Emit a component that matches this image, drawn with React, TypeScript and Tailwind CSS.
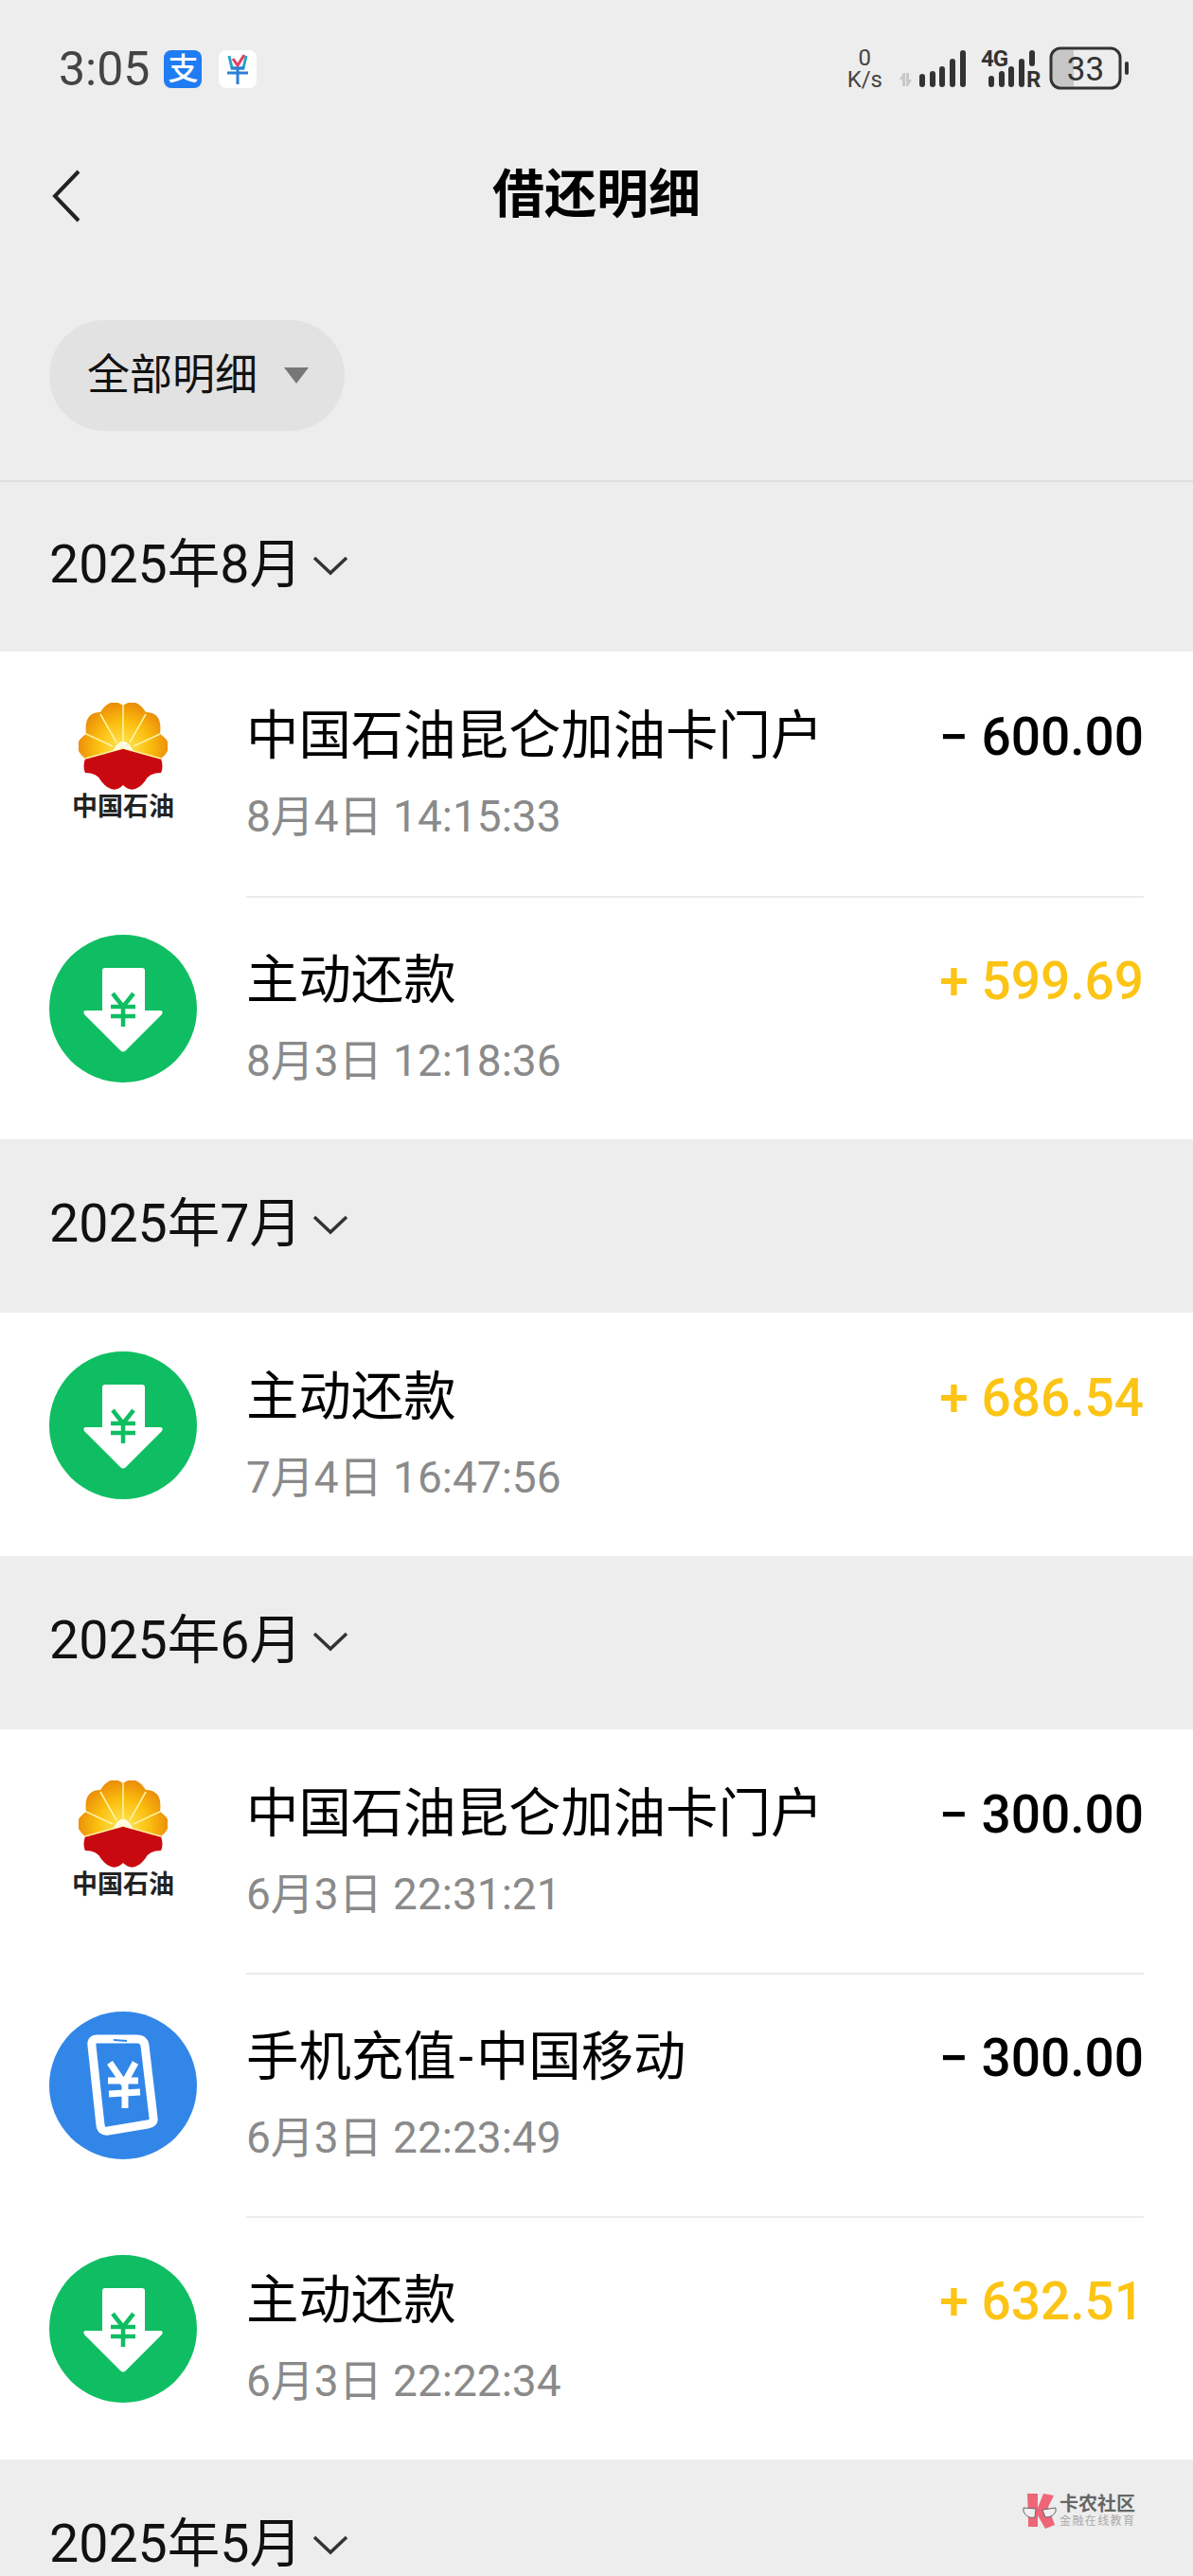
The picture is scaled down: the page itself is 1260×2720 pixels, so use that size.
import React from "react";

type Kind = "oil" | "repay" | "phone";

const sections: {
  month: string;
  first?: boolean;
  rows: { kind: Kind; title: string; date: string; amount: string }[];
}[] = [
  {
    month: "2025年8月",
    first: true,
    rows: [
      { kind: "oil", title: "中国石油昆仑加油卡门户", date: "8月4日 14:15:33", amount: "− 600.00" },
      { kind: "repay", title: "主动还款", date: "8月3日 12:18:36", amount: "+ 599.69" },
    ],
  },
  {
    month: "2025年7月",
    rows: [{ kind: "repay", title: "主动还款", date: "7月4日 16:47:56", amount: "+ 686.54" }],
  },
  {
    month: "2025年6月",
    rows: [
      { kind: "oil", title: "中国石油昆仑加油卡门户", date: "6月3日 22:31:21", amount: "− 300.00" },
      { kind: "phone", title: "手机充值-中国移动", date: "6月3日 22:23:49", amount: "− 300.00" },
      { kind: "repay", title: "主动还款", date: "6月3日 22:22:34", amount: "+ 632.51" },
    ],
  },
  { month: "2025年5月", rows: [] },
];

function OilLogo() {
  return (
    <div className="flex flex-col items-center w-[156px]">
      <svg width="94" height="92" viewBox="0 0 94 92">
        <defs>
          <radialGradient id="sun" cx="47" cy="48" r="50" gradientUnits="userSpaceOnUse">
            <stop offset="0" stopColor="#ffe95a" />
            <stop offset="0.55" stopColor="#fbbf10" />
            <stop offset="1" stopColor="#ea8a08" />
          </radialGradient>
        </defs>
        <path
          d="M47 3 Q34 -7 23 10 Q5 10 8 33 Q-10 45 7 59 L47 48 L87 59 Q104 45 86 33 Q89 10 71 10 Q60 -7 47 3 Z"
          fill="url(#sun)"
        />
        <path
          d="M7 59 L47 48 L87 59 Q90 68 87 74 Q74 74 70 83 Q58 98 47 87 Q36 98 24 83 Q20 74 7 74 Q4 68 7 59 Z"
          fill="#c80a10"
        />
        <g stroke="#fff2a0" strokeWidth="1.6">
          <line x1="47" y1="40" x2="47" y2="3" />
          <line x1="40" y1="42" x2="23" y2="12" />
          <line x1="54" y1="42" x2="71" y2="12" />
          <line x1="36" y1="46" x2="8" y2="33" />
          <line x1="58" y1="46" x2="86" y2="33" />
          <line x1="7" y1="59" x2="47" y2="48" />
          <line x1="87" y1="59" x2="47" y2="48" />
        </g>
        <path d="M36 51 Q47 30 58 51 L47 48 Z" fill="#fffbe0" />
      </svg>
      <span className="mt-[3px] text-[27px] leading-[30px] font-bold text-[#222]">中国石油</span>
    </div>
  );
}

function RepayIcon() {
  return (
    <svg width="156" height="156" viewBox="0 0 156 156">
      <circle cx="78" cy="78" r="78" fill="#0fbe62" />
      <path
        d="M59 35 H98 Q101 35 101 38 V80 H117 Q121 80 119 84 L81 122 Q78 125 75 122 L37 84 Q35 80 39 80 H56 V38 Q56 35 59 35 Z"
        fill="#fff"
      />
      <g stroke="#0fbe62" strokeWidth="4.5" fill="none">
        <path d="M67 62 L78 76 L89 62" />
        <path d="M65 76 H91 M65 86 H91 M78 76 V97" />
      </g>
    </svg>
  );
}

function PhoneIcon() {
  return (
    <svg width="156" height="156" viewBox="0 0 156 156">
      <circle cx="78" cy="78" r="78" fill="#3286e8" />
      <path
        d="M51 29 L93 29 Q100 29 101 36 L110 112 Q111 118 104 119 L62 126 Q55 127 54 120 L45 36 Q44 29 51 29 Z"
        fill="#3286e8"
        stroke="#fff"
        strokeWidth="9"
        strokeLinejoin="round"
      />
      <path d="M68 30 L82 31" stroke="#3286e8" strokeWidth="2" />
      <g stroke="#fff" strokeWidth="7" fill="none">
        <path d="M64 54 L79 76 L91 54" />
        <path d="M62 73 H94 M63 87 L96 85 M80 76 V102" />
      </g>
    </svg>
  );
}

function StatusIcons() {
  return (
    <svg width="250" height="60" viewBox="-20 0 250 60">
      <g fill="#333">
        {[
          [5, 35],
          [16, 32],
          [26, 27],
          [37, 19],
          [48, 10],
          [78, 37],
          [89, 32],
          [99, 27],
          [110, 19],
        ].map(([x, y]) => (
          <rect key={`${x}`} x={x} y={y} width="6" height={49 - y} rx="3" />
        ))}
        <rect x="121" y="10" width="6" height="17" rx="3" />
      </g>
      <path d="M-12 34 L-16 41 H-13 V48 H-10 V34 Z M-7 48 L-3 41 H-6 V34 H-9 V48 Z" fill="#c8c8c8" />
      <text x="70" y="27" fontSize="24" fontWeight="700" fill="#333" textLength="29">
        4G
      </text>
      <text x="118" y="49" fontSize="24" fontWeight="700" fill="#333">
        R
      </text>
      <path d="M144 14 Q146 10 152 10 H168 V48 H152 Q146 48 144 44 Z" fill="#c6c6c6" />
      <rect x="144" y="8" width="73" height="42" rx="10" fill="none" stroke="#333" strokeWidth="3" />
      <text x="180.5" y="42" fontSize="35" textAnchor="middle" fill="#333">
        33
      </text>
      <rect x="222" y="22" width="4" height="14" rx="2" fill="#333" />
    </svg>
  );
}

function Row({
  row,
  index,
  tall,
}: {
  row: (typeof sections)[0]["rows"][0];
  index: number;
  tall: boolean;
}) {
  const [head, tail] = row.title.split("-");
  return (
    <div className={`flex bg-white ${tall ? "h-[258px]" : "h-[257px]"}`}>
      <div className={`w-[260px] shrink-0 pl-[52px] ${row.kind === "oil" ? "pt-[54px]" : "pt-[41px]"}`}>
        {row.kind === "oil" && <OilLogo />}
        {row.kind === "repay" && <RepayIcon />}
        {row.kind === "phone" && <PhoneIcon />}
      </div>
      <div
        className={`flex flex-1 justify-between mr-[52px] pt-[57px] ${
          index > 0 ? "border-t-2 border-[#ebebeb]" : "border-t-2 border-white"
        }`}
      >
        <div>
          <div className="text-[55.4px] leading-[62px] text-black whitespace-nowrap">
            {head}
            {tail && <span className="mx-[3px]">-</span>}
            {tail}
          </div>
          <div className="mt-[28px] text-[46px] leading-[50px] text-[#8a8a8a] whitespace-nowrap">
            {row.date}
          </div>
        </div>
        <div
          className={`text-[55px] leading-[62px] font-medium whitespace-nowrap ${
            row.amount.startsWith("+") ? "text-[#fcc414]" : "text-black"
          }`}
        >
          {row.amount}
        </div>
      </div>
    </div>
  );
}

export default function App() {
  return (
    <div className="relative h-[2720px] w-[1260px] overflow-hidden bg-[#ededed] font-[Roboto,'Noto_Sans_CJK_SC',sans-serif]">
      {/* status bar */}
      <div className="flex h-[146px] items-center justify-between pl-[62px] pr-[64px]">
        <div className="flex items-center">
          <span className="text-[50px] leading-none text-[#444]">3:05</span>
          <div className="ml-[15px] flex h-[40px] w-[40px] items-center justify-center rounded-[8px] bg-[#1f7cf2] text-[32px] font-medium leading-none text-white">
            支
          </div>
          <div className="ml-[18px] flex h-[40px] w-[40px] items-center justify-center rounded-[8px] bg-white">
            <svg width="26" height="34" viewBox="0 0 26 34" fill="none">
              <path d="M4 3 L7 16 H19 L22 3" stroke="#27a5c8" strokeWidth="3" />
              <path d="M8 6 L13 13 L20 2" stroke="#e2405f" strokeWidth="3" />
              <path d="M2 21 H24 M13 16 V33 M6 16 H20" stroke="#2a7fd8" strokeWidth="3" />
            </svg>
          </div>
        </div>
        <div className="flex items-center">
          <div className="mr-[14px] flex flex-col items-center text-[#444]">
            <span className="text-[24px] leading-[22px]">0</span>
            <span className="text-[24px] leading-[24px]">K/s</span>
          </div>
          <StatusIcons />
        </div>
      </div>

      {/* header */}
      <div className="grid h-[118px] grid-cols-[1fr_auto_1fr] items-center pl-[55px]">
        <svg className="mt-[3px]" width="30" height="56" viewBox="0 0 30 56" fill="none">
          <path d="M28 2 L3 28 L28 54" stroke="#222" strokeWidth="4" />
        </svg>
        <h1 className="text-[55px] font-bold leading-none text-black pr-[55px]">借还明细</h1>
      </div>

      {/* filter pill */}
      <div className="mt-[74px] pb-[52px] pl-[52px] border-b-2 border-[#dedede]">
        <div className="flex h-[117px] w-[312px] items-center rounded-full bg-[#e2e2e2] pl-[40px]">
          <span className="text-[45px] leading-none text-[#111]">全部明细</span>
          <span className="ml-[28px] h-0 w-0 border-x-[13px] border-t-[17px] border-x-transparent border-t-[#777]" />
        </div>
      </div>

      {sections.map((section) => (
        <div key={section.month}>
          <div
            className={`flex items-center pl-[52px] pb-[3px] ${section.first ? "h-[179px]" : "h-[183px]"}`}
          >
            <span className="text-[55.5px] leading-none text-[#111]">{section.month}</span>
            <svg className="ml-[11px]" width="38" height="22" viewBox="0 0 38 22" fill="none">
              <path d="M2 3 L19 19 L36 3" stroke="#333" strokeWidth="3.5" />
            </svg>
          </div>
          {section.rows.map((row, i) => (
            <Row key={row.date} row={row} index={i} tall={!!section.first && i === 0} />
          ))}
        </div>
      ))}

      {/* watermark */}
      <div className="absolute left-[1080px] top-[2632px] flex items-center">
        <svg width="36" height="38" viewBox="0 0 36 38">
          <path d="M5 1 H16 V16 L22 1 L33 3 L27 15 L34 34 L24 38 L16 24 V36 H6 V24 Z" fill="#ee6577" />
          <path d="M1 16 L14 17 L13 26 Q5 28 1 20 Z M35 16 L21 18 L24 26 Q32 26 35 20 Z" fill="#f0f0f0" stroke="#666" strokeWidth="1" />
        </svg>
        <div className="ml-[3px] flex flex-col">
          <span className="text-[20px] font-bold leading-[22px] text-[#666]">卡农社区</span>
          <span className="text-[12px] leading-[14px] tracking-[1.4px] text-[#aaa]">金融在线教育</span>
        </div>
      </div>
    </div>
  );
}
